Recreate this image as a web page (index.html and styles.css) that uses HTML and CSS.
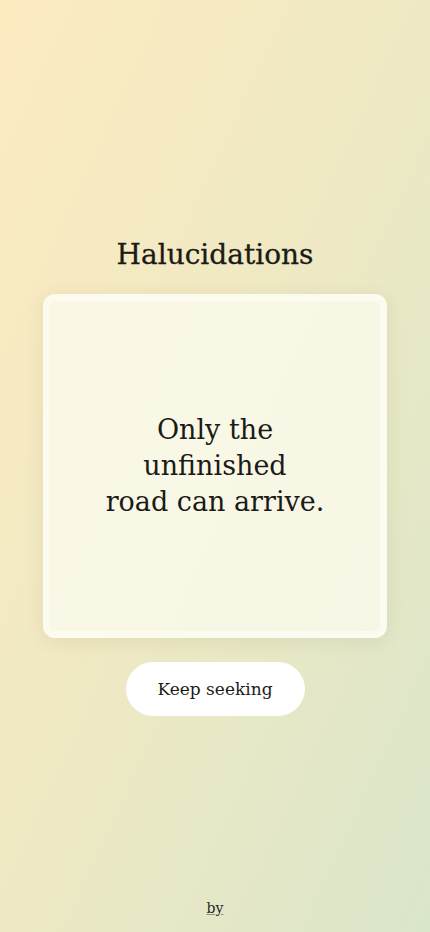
FILE: index.html
```html
<!DOCTYPE html>
<html lang="en">
<head>
<meta charset="utf-8">
<meta name="viewport" content="width=device-width, initial-scale=1">
<title>Halucidations</title>
<link rel="stylesheet" href="styles.css">
</head>
<body>
<div class="page">
  <main class="main">
    <h1 class="title">Halucidations</h1>
    <section class="card">
      <p class="quote">Only the<br>unfinished<br>road can arrive.</p>
    </section>
    <button class="btn" type="button">Keep seeking</button>
  </main>
  <footer class="footer"><a class="by" href="#">by</a></footer>
</div>
</body>
</html>
```

FILE: styles.css
```css
* { box-sizing: border-box; }
html, body { margin: 0; padding: 0; }
body {
  font-family: "DejaVu Serif", "Liberation Serif", serif;
  color: #1b1b16;
  background: linear-gradient(to bottom right, #fdebc0 0%, #eee9c4 50%, #dae6ca 100%);
  min-height: 100vh;
}
.page {
  min-height: 932px;
  display: flex;
  flex-direction: column;
}
.main {
  flex: 1;
  display: flex;
  flex-direction: column;
  align-items: center;
  padding-top: 235px;
}
.title {
  margin: 0;
  font-size: 28px;
  font-weight: normal;
  line-height: 40px;
  -webkit-text-stroke: 0.3px #1b1b16;
}
.card {
  margin-top: 19px;
  width: 344px;
  height: 344px;
  border-radius: 12px;
  background: rgba(251, 250, 238, 0.8);
  box-shadow: inset 0 0 0 7px rgba(255, 255, 250, 0.5), 0 3px 18px rgba(120, 110, 60, 0.12);
  display: flex;
  align-items: center;
  justify-content: center;
}
.quote {
  margin: 0;
  text-align: center;
  font-size: 27px;
  line-height: 36px;
}
.btn {
  margin-top: 24px;
  width: 179px;
  height: 54px;
  border: none;
  border-radius: 27px;
  background: #ffffff;
  font-family: "DejaVu Serif", "Liberation Serif", serif;
  font-size: 17px;
  color: #1b1b16;
  cursor: pointer;
}
.footer {
  display: flex;
  justify-content: center;
  padding-bottom: 14px;
}
.by {
  font-size: 14px;
  line-height: 20px;
  color: #2a2a22;
  text-decoration: underline;
  text-decoration-color: rgba(40, 40, 30, 0.45);
}
```
